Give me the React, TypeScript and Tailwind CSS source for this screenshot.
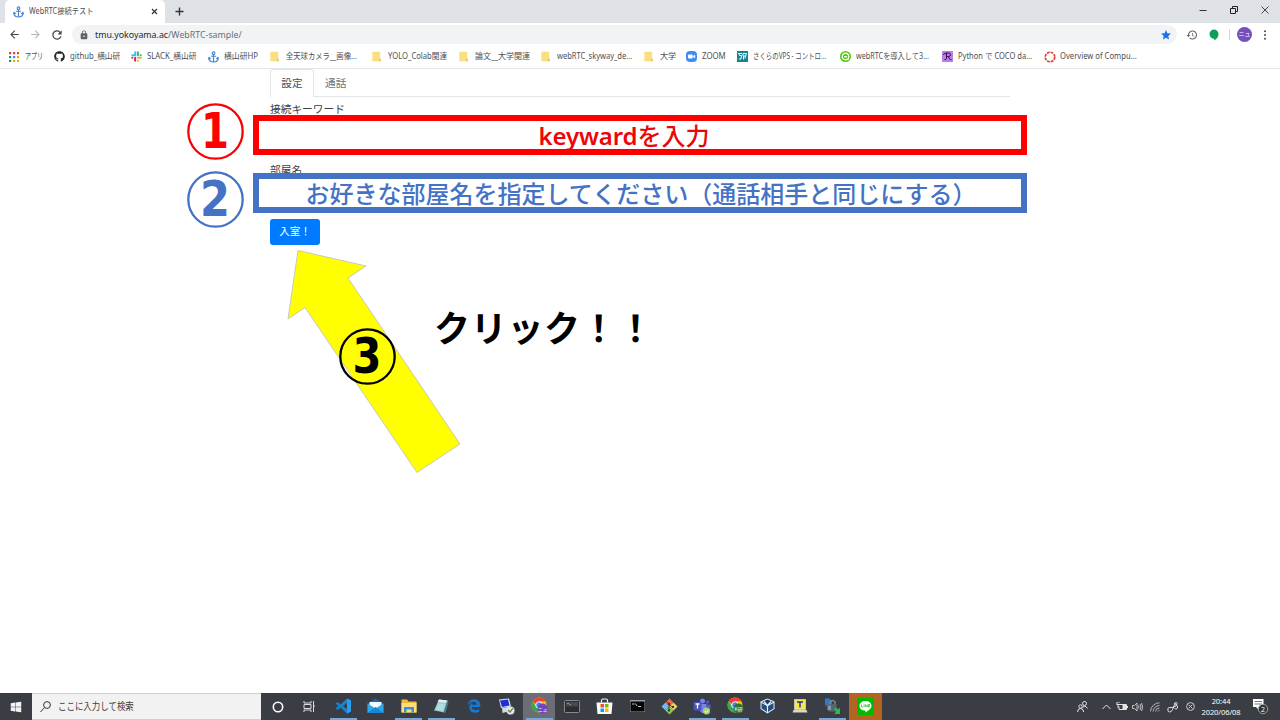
import type { ReactNode } from "react";
import { FaGithub, FaWindows, FaEdgeLegacy } from "react-icons/fa";
import { MdHistory, MdLock, MdStar, MdRefresh, MdArrowBack, MdArrowForward } from "react-icons/md";

const Anchor = () => (
  <svg width="11" height="12" viewBox="0 0 22 24" fill="none" stroke="#4a86cf" strokeWidth="2.4">
    <circle cx="11" cy="4.5" r="2.6" />
    <path d="M11 7v15M6 10.5h10M2 14c0 5 4 8 9 8s9-3 9-8M.8 17l1.4-4 3.4 2.4M21.2 17l-1.4-4-3.4 2.4" />
  </svg>
);

const Folder = () => (
  <svg width="9" height="11" viewBox="0 0 9 11">
    <path d="M.3 .8h7.900v6.700h.8V10.300H.3z" fill="#fadf82" />
    <path d="M6.500 8h2.500v2.300H6.500z" fill="#f0cd62" />
  </svg>
);

const AppsGrid = () => (
  <svg width="10" height="10" viewBox="0 0 10 10">
    <path d="M0 0h2.2v2.2H0zM4 0h2.2v2.2H4zM8 0h2v2.2H8z" fill="#db4437" />
    <path d="M0 4h2.2v2.2H0z" fill="#0f9d58" />
    <path d="M4 4h2.2v2.2H4z" fill="#4285f4" />
    <path d="M8 4h2v2.2H8zM4 8h2.2v2H4zM8 8h2v2H8z" fill="#f4a400" />
    <path d="M0 8h2.2v2H0z" fill="#0f9d58" />
  </svg>
);

const Slack = () => (
  <svg width="11" height="11" viewBox="0 0 22 22" strokeWidth="4" strokeLinecap="round">
    <path d="M8.3 2.5v6M2.5 8.3h6" stroke="#36c5f0" />
    <path d="M13.7 2.5v6M19.5 8.3h-.2" stroke="#2eb67d" />
    <path d="M13.7 13.7h6M13.7 19.5v-.2" stroke="#ecb22e" />
    <path d="M8.3 13.7v6M2.5 13.7h.2" stroke="#e01e5a" />
  </svg>
);

const Zoom = () => (
  <svg width="11" height="11" viewBox="0 0 22 22">
    <rect width="22" height="22" rx="8" fill="#3f8cf7" />
    <rect x="4" y="7" width="9.5" height="8" rx="1.8" fill="#fff" />
    <path d="M14.3 10l4-2.6v7.2l-4-2.6z" fill="#fff" />
  </svg>
);

const Sakura = () => (
  <svg width="11" height="11" viewBox="0 0 22 22">
    <rect width="22" height="22" fill="#138490" />
    <path d="M10 5H3l2 4h4l-1 7H4M12 5h7l-2 5h-4v7M12 5v5M17 10l-1 5" fill="none" stroke="#fff" strokeWidth="2" />
  </svg>
);

const Qiita = () => (
  <svg width="11" height="11" viewBox="0 0 22 22">
    <circle cx="11" cy="11" r="11" fill="#50c80f" />
    <circle cx="11" cy="11" r="6.500" fill="none" stroke="#fff" strokeWidth="2.6" />
    <path d="M15 15l2.500 2.500" stroke="#fff" strokeWidth="2" />
    <path d="M8 10h6v3H8z" fill="#fff" />
  </svg>
);

const PurpleR = () => (
  <svg width="11" height="11" viewBox="0 0 22 22">
    <rect width="22" height="22" fill="#bb7de8" />
    <path d="M9 4v11q0 3-4 2M3 8q0-4 6-4h4q4 0 4 3.500T13 11H9M12.500 11l3 5.500q1 1 3.500 .5" fill="none" stroke="#341048" strokeWidth="2" />
  </svg>
);

const DottedRing = () => (
  <svg width="12" height="12" viewBox="0 0 24 24">
    <circle cx="12" cy="12" r="9.500" fill="none" stroke="#e0392d" strokeWidth="3.400" strokeDasharray="5.600 1.860" />
  </svg>
);

type Mark = { icon: ReactNode; label: string; box: string; text: string };

const marks: Mark[] = [
  { icon: <AppsGrid />, label: "アプリ", box: "w-[45px]", text: "scale-x-[0.71]" },
  { icon: <FaGithub size={11} color="#24292e" />, label: "github_横山研", box: "w-[77px]", text: "scale-x-[0.905]" },
  { icon: <Slack />, label: "SLACK_横山研", box: "w-[77px]", text: "scale-x-[0.91]" },
  { icon: <Anchor />, label: "横山研HP", box: "w-[61.5px]", text: "scale-x-[0.92]" },
  { icon: <Folder />, label: "全天球カメラ__画像...", box: "w-[102.5px]", text: "scale-x-[0.86]" },
  { icon: <Folder />, label: "YOLO_Colab関連", box: "w-[87px]", text: "scale-x-[0.9]" },
  { icon: <Folder />, label: "論文__大学関連", box: "w-[82px]", text: "scale-x-[0.94]" },
  { icon: <Folder />, label: "webRTC_skyway_de...", box: "w-[103px]", text: "scale-x-[0.885]" },
  { icon: <Folder />, label: "大学", box: "w-[42px]", text: "scale-x-[0.95]" },
  { icon: <Zoom />, label: "ZOOM", box: "w-[50.5px]", text: "scale-x-[0.92]" },
  { icon: <Sakura />, label: "さくらのVPS - コントロ...", box: "w-[103px]", text: "scale-x-[0.755]" },
  { icon: <Qiita />, label: "webRTCを導入して3...", box: "w-[102.5px]", text: "scale-x-[0.85]" },
  { icon: <PurpleR />, label: "Python で COCO da...", box: "w-[102px]", text: "scale-x-[0.885]" },
  { icon: <DottedRing />, label: "Overview of Compu...", box: "w-[100px]", text: "scale-x-[0.9]" },
];

const Chrome = ({ badge, letters }: { badge: string; letters: string }) => (
  <svg className="ml-[2px]" width="19" height="18" viewBox="0 0 19 18">
    <circle cx="8" cy="8" r="7.500" fill="#fbc116" />
    <path d="M1.500 4.250A7.500 7.500 0 0 0 8 15.500L11 10 8 8 4.800 9.800z" fill="#34a853" />
    <path d="M1.500 4.250A7.500 7.500 0 0 1 14.500 4.250H8L4.500 7z" fill="#e94335" />
    <circle cx="8" cy="8" r="3.500" fill="#fff" />
    <circle cx="8" cy="8" r="2.700" fill="#4285f4" />
    <circle cx="11.500" cy="11.500" r="5" fill={badge} />
    <text x="11.500" y="13.500" fontSize="4.800" fill="#fff" textAnchor="middle" fontFamily="Noto Sans CJK JP, sans-serif">{letters}</text>
  </svg>
);

const VsCode = () => (
  <svg width="17" height="16" viewBox="0 0 34 32">
    <path d="M24 1l8 4v22l-8 4L11 19l-6 5-4-3 6-5-6-5 4-3 6 5zM24 10l-8 6 8 6z" fill="#1683cf" fillRule="evenodd" />
    <path d="M24 1l8 4v22l-8 4z" fill="#2a9df0" />
  </svg>
);
const Mail = () => (
  <svg width="17" height="16" viewBox="0 0 34 32">
    <path d="M1 11L17 1l16 10v18H1z" fill="#0f6cbd" />
    <path d="M5 8h24v14H5z" fill="#f4fbff" />
    <path d="M1 11l16 10 16-10v19H1z" fill="#2fa7e8" />
    <path d="M1 30l16-12 16 12z" fill="#1985d4" />
  </svg>
);
const Explorer = () => (
  <svg width="16" height="14" viewBox="0 0 32 28">
    <path d="M1 1h11l3 4h16v22H1z" fill="#f0b93a" />
    <path d="M1 8h30v19H1z" fill="#ffdc7c" />
    <path d="M6 16h20v11h-5v-6H11v6H6z" fill="#3b91d6" />
  </svg>
);
const Notepad = () => (
  <svg width="16" height="16" viewBox="0 0 32 32">
    <path d="M12 3l17 2-6 24L2 25z" fill="#8fc4cc" />
    <path d="M12 3l17 2-1 5L9 8z" fill="#e4eeee" />
    <path d="M28 5l3 3-6 22-4-1z" fill="#4b7d88" />
    <path d="M10 10l15 2-5 15-15-4z" fill="#b0dcdf" />
  </svg>
);
const Remote = () => (
  <svg width="17" height="17" viewBox="0 0 34 34">
    <path d="M2 3l20-2 4 16-20 3z" fill="#dfe3ec" />
    <path d="M4 5l16-2 3 12-15 3z" fill="#1c2fd0" />
    <path d="M8 20l14-2 2 8-15 4z" fill="#d5d8dd" />
    <circle cx="25" cy="25" r="8" fill="#e3e7e4" />
    <path d="M20 24l4 4 6-8" fill="none" stroke="#5c7c5c" strokeWidth="2.500" />
  </svg>
);
const Terminal = () => (
  <svg width="16" height="13" viewBox="0 0 32 26">
    <rect x="1" y="1" width="30" height="24" rx="2" fill="#2c2d2f" stroke="#85888c" strokeWidth="2" />
    <path d="M4 4h24v9H4z" fill="#47494c" />
    <path d="M6 7h4M11 9h3" stroke="#c5c5c5" strokeWidth="1.300" />
  </svg>
);
const Store = () => (
  <svg width="17" height="17" viewBox="0 0 34 34">
    <path d="M11 9V5q0-3 3-3h6q3 0 3 3v4" fill="none" stroke="#f4f4f4" strokeWidth="2.400" />
    <path d="M1 9h32l-2 23H3z" fill="#fafafa" />
    <path d="M9 12h7v7H9z" fill="#f25022" />
    <path d="M18 12h7v7h-7z" fill="#7fba00" />
    <path d="M9 21h7v7H9z" fill="#00a4ef" />
    <path d="M18 21h7v7h-7z" fill="#ffb900" />
  </svg>
);
const Cmd = () => (
  <svg width="15" height="12" viewBox="0 0 30 24">
    <path d="M0 0h30v24H0z" fill="#9a9da0" />
    <path d="M1 3h28v20H1z" fill="#050505" />
    <path d="M4 8h5M11 7l3 5M16 13h6" stroke="#ddd" strokeWidth="1.800" />
  </svg>
);
const Git = () => (
  <svg width="17" height="17" viewBox="0 0 34 34">
    <path d="M17 1l8 8-8 8-8-8z" fill="#e9694f" />
    <path d="M9 9l8 8-8 8-8-8z" fill="#74b8ea" />
    <path d="M25 9l8 8-8 8-8-8z" fill="#f4d35b" />
    <path d="M17 17l8 8-8 8-8-8z" fill="#8cc65b" />
    <path d="M11 7l5 5v14M16 13l8 6" fill="none" stroke="#30343a" strokeWidth="1.800" />
    <circle cx="16" cy="12" r="2.300" fill="#30343a" />
    <circle cx="16" cy="25" r="2.300" fill="#30343a" />
    <circle cx="24" cy="18" r="2.300" fill="#30343a" />
  </svg>
);
const Teams = () => (
  <svg width="18" height="17" viewBox="0 0 36 34">
    <circle cx="19" cy="6" r="5" fill="#7b83eb" />
    <circle cx="29" cy="8" r="3.500" fill="#5059c9" />
    <path d="M13 12h14v13q-2 6-8 5-5-1-6-7z" fill="#7b83eb" />
    <path d="M28 13h7v9q-2 5-7 3z" fill="#5059c9" />
    <rect x="1" y="8" width="16" height="17" rx="1.500" fill="#4b53bc" />
    <path d="M5 12h8M9 12v9" stroke="#fff" strokeWidth="2.600" />
    <circle cx="27" cy="26" r="7" fill="#a6d26a" />
    <path d="M23.500 26l3 3 4.500-5" fill="none" stroke="#fff" strokeWidth="2" />
  </svg>
);
const VBox = () => (
  <svg width="15" height="16" viewBox="0 0 30 32">
    <path d="M15 1l14 6v15l-14 9L1 22V7z" fill="#e4edf5" />
    <path d="M15 3l11 5-11 6L4 8z" fill="#183a61" />
    <path d="M3 10l11 6v12L3 21zM27 10l-11 6v12l11-7z" fill="#214f80" />
    <path d="M8 7l7 8 7-8M15 15v12" fill="none" stroke="#e4edf5" strokeWidth="2.400" />
  </svg>
);
const TeraTerm = () => (
  <svg width="16" height="14" viewBox="0 0 32 28">
    <path d="M5 1h22v20H5z" fill="#f3e94e" stroke="#c5c5b8" strokeWidth="2" />
    <path d="M10 6h12M16 6v11" fill="none" stroke="#252eaa" strokeWidth="3" />
    <path d="M3 22h26l2 5H1z" fill="#d7d5cd" />
  </svg>
);
const SftpLock = () => (
  <svg width="17" height="17" viewBox="0 0 34 34">
    <path d="M2 1h9l5 5v9H2z" fill="#2b7bc5" />
    <path d="M12 12V8q5-6 10 0v7" fill="none" stroke="#7c868d" strokeWidth="3" />
    <path d="M9 12h16v15H9z" fill="#59646d" />
    <path d="M7 15h7v9H7z" fill="#8a949c" />
    <path d="M20 20l4-1 4 4 4-4v13H20l4-4z" fill="#28bd49" />
  </svg>
);
const Line = () => (
  <svg width="17" height="17" viewBox="0 0 34 34">
    <rect width="34" height="34" rx="3" fill="#00b900" />
    <path d="M17 6c7 0 12 4 12 10 0 6-8 10-12 13v-4C9 25 5 21 5 16 5 10 10 6 17 6z" fill="#fff" />
    <path d="M9 13v5h3M14 13v5M16.500 18v-5l4 5v-5M26 13h-3v5h3M23 15.500h3" fill="none" stroke="#00b900" strokeWidth="1.300" />
  </svg>
);

const tasks: { icon: ReactNode; running?: boolean; bg?: string }[] = [
  { icon: <VsCode />, running: true },
  { icon: <Mail /> },
  { icon: <Explorer />, running: true },
  { icon: <Notepad />, running: true },
  { icon: <FaEdgeLegacy size={14} color="#1479d6" /> },
  { icon: <Remote /> },
  { icon: <Chrome badge="#7248b9" letters="ニュ" />, running: true, bg: "bg-[#6b6f75]" },
  { icon: <Terminal /> },
  { icon: <Store /> },
  { icon: <Cmd /> },
  { icon: <Git /> },
  { icon: <Teams />, running: true },
  { icon: <Chrome badge="#33713b" letters="K研" />, running: true },
  { icon: <VBox /> },
  { icon: <TeraTerm /> },
  { icon: <SftpLock />, running: true },
  { icon: <Line />, bg: "bg-[#b3651f]" },
];

function Browser() {
  return (
    <header className="h-[69px] shrink-0 border-b border-[#e4e4e6]">
      <div className="flex h-[23px] bg-[#dee1e6] pl-[5px]">
        <div className="flex w-[160px] items-center rounded-t-[5px] bg-white pl-2">
          <Anchor />
          <span className="ml-[5px] w-[120px] origin-left scale-x-[0.855] whitespace-nowrap text-[8.5px] text-[#4c4f53]">WebRTC接続テスト</span>
          <svg className="ml-auto mr-[7px]" width="7" height="7" viewBox="0 0 7 7" stroke="#333639" strokeWidth="1.200">
            <path d="M1 1l5 5M6 1L1 6" />
          </svg>
        </div>
        <svg className="ml-[10px] mt-[7px]" width="9" height="9" viewBox="0 0 9 9" stroke="#333639" strokeWidth="1.400">
          <path d="M4.500 .5v8M.5 4.500h8" />
        </svg>
        <div className="ml-auto flex h-[19px] items-center gap-[23px] pr-[11px]">
          <svg width="8" height="8" viewBox="0 0 8 8" stroke="#333" strokeWidth="1"><path d="M.5 4.500h7" /></svg>
          <svg width="8" height="8" viewBox="0 0 8 8" fill="none" stroke="#222" strokeWidth="1"><path d="M.5 2.500h5v5h-5zM2.500 2V.5h5v5H6" /></svg>
          <svg width="8" height="8" viewBox="0 0 8 8" stroke="#333" strokeWidth=".9"><path d="M.5 .5l7 7M7.500 .5l-7 7" /></svg>
        </div>
      </div>
      <div className="flex h-[23px] items-center bg-white pl-2">
        <MdArrowBack size={13} color="#44474b" />
        <MdArrowForward size={13} color="#b4b6b9" className="ml-[8px]" />
        <MdRefresh size={14} color="#44474b" className="ml-[8px]" />
        <div className="ml-2 flex h-[19px] w-[1105px] items-center rounded-full bg-[#f1f3f4] pl-[7px] pr-[5px]">
          <MdLock size={10} color="#5f6368" />
          <span className="ml-[6px] origin-left scale-x-[0.948] whitespace-nowrap text-[9.3px] text-[#6c6f73]">
            <span className="text-[#26282b]">tmu.yokoyama.ac</span>/WebRTC-sample/
          </span>
          <MdStar size={12} color="#1a73e8" className="ml-auto" />
        </div>
        <MdHistory size={12} color="#5f6368" className="ml-[9px]" />
        <svg className="ml-[11px]" width="10" height="12" viewBox="0 0 10 12">
          <path d="M5 .5a4.500 4.500 0 0 1 4.500 4.700C9.500 8 7.500 10 5.200 11.500V9.700A4.600 4.600 0 0 1 5 .5z" fill="#0f9d58" />
        </svg>
        <div className="ml-[10px] h-[11px] w-px bg-[#d5d7da]" />
        <div className="ml-[7px] flex size-[15px] items-center justify-center rounded-full bg-[#7550bd] text-[6px] text-white">ニュ</div>
        <svg className="ml-[11px]" width="4" height="10" viewBox="0 0 4 10" fill="#505357">
          <circle cx="2" cy="1.300" r="1.050" /><circle cx="2" cy="5" r="1.050" /><circle cx="2" cy="8.700" r="1.050" />
        </svg>
      </div>
      <nav className="flex h-[21px] items-center bg-white pl-[9px] text-[8.5px] text-[#4c4f53]">
        {marks.map((m) => (
          <div key={m.label} className={`flex shrink-0 items-center ${m.box}`}>
            <span className="flex w-4 shrink-0">{m.icon}</span>
            <span className={`origin-left whitespace-nowrap ${m.text}`}>{m.label}</span>
          </div>
        ))}
      </nav>
    </header>
  );
}

function Step({ n, place, digit }: { n: string; place: string; digit: string }) {
  return (
    <div className={`absolute flex size-[57px] items-center justify-center rounded-full font-['DejaVu_Sans'] text-[49px] font-bold leading-none ${place}`}>
      <svg className="absolute inset-0" width="57" height="57" viewBox="0 0 57 57" fill="none" stroke="currentColor" strokeWidth="2.300">
        <circle cx="28.500" cy="28.500" r="27.200" />
      </svg>
      <span className={digit}>{n}</span>
    </div>
  );
}

function Page() {
  return (
    <main className="relative flex-1 bg-white">
      <div className="ml-[270px] w-[740px] text-[10.7px] text-[#3b4045]">
        <div className="flex h-[28px] border-b border-[#e3e6e9]">
          <div className="-mb-px flex w-[44px] items-center justify-center rounded-t-[3px] border border-b-0 border-[#e3e6e9] bg-white text-[#495057]">設定</div>
          <div className="flex items-center pl-[11px] pt-px text-[#6c757d]">通話</div>
        </div>
        <div className="mt-1 h-4 leading-4">接続キーワード</div>
        <div className="mt-[45px] h-4 leading-4">部屋名</div>
        <button className="mt-[41px] flex h-[26px] w-[50px] items-center justify-center rounded-[3px] bg-[#007bff] text-[10.5px] text-white">入室！</button>
      </div>
      <Step n="1" place="left-[187px] top-[33.500px] text-[#ff0000]" digit="scale-x-[0.82]" />
      <Step n="2" place="left-[187px] top-[102px] text-[#4472c4]" digit="scale-x-[0.88]" />
      <div className="absolute left-[253px] top-[46px] flex h-[40px] w-[774px] items-center justify-center border-[6px] border-[#ff0000] bg-white pr-[32px] pt-[2px] text-[24px] leading-none text-[#ee0505]"><span className="font-semibold tracking-[-0.1px]">keyward</span><span className="font-medium">を入力</span></div>
      <div className="absolute left-[253px] top-[104px] flex h-[40px] w-[774px] items-center justify-center whitespace-nowrap border-[6px] border-[#4472c4] bg-white pl-[2px] pt-[2px] text-[24px] font-medium leading-none text-[#4472c4]">お好きな部屋名を指定してください（通話相手と同じにする）</div>
      <svg className="absolute left-[280px] top-[175px]" width="190" height="235" viewBox="280 244 190 235">
        <path d="M298 250.500l68 15.500-18 12 112 166-43 28.500-112-165-17 11.500z" fill="#ffff00" stroke="#c9c9b8" />
      </svg>
      <Step n="3" place="left-[339px] top-[259px] text-black" digit="scale-x-[0.85]" />
      <div className="absolute left-[434px] top-[241px] whitespace-nowrap text-[36px] font-bold leading-[38px] tracking-[0.7px] text-black">クリック！！</div>
    </main>
  );
}

function Taskbar() {
  return (
    <footer className="flex h-[27px] shrink-0 bg-[#3a3e44] text-white">
      <div className="flex w-[32px] items-center justify-center"><FaWindows size={12} color="#f3f3f3" /></div>
      <div className="flex w-[229px] items-center border-y border-[#cfcfcf] bg-[#f2f2f2] pl-2 text-[10px] text-[#3e3e3e]">
        <svg width="11" height="12" viewBox="0 0 11 12" fill="none" stroke="#333" strokeWidth="1"><circle cx="7" cy="4" r="3.400" /><path d="M4.600 6.500L.5 11" /></svg>
        <span className="ml-[7px] origin-left scale-x-[0.845] whitespace-nowrap">ここに入力して検索</span>
      </div>
      <div className="flex w-[33px] items-center justify-center">
        <svg width="12" height="12" viewBox="0 0 12 12" fill="none" stroke="#fff" strokeWidth="1.600"><circle cx="6" cy="6" r="4.700" /></svg>
      </div>
      <div className="flex w-[33px] items-center justify-center pr-[3px]">
        <svg width="12" height="11" viewBox="0 0 12 11" fill="none" stroke="#d8dadd" strokeWidth="1"><path d="M1 0v2h7V0M1 3.500h7v4H1zM1 11V9h7v2M10.500 0v11M10 5h2" /></svg>
      </div>
      {tasks.map((t, i) => (
        <div key={i} className={`flex w-[32.65px] flex-col items-center ${t.bg ?? ""}`}>
          <div className="flex h-[25px] items-center pt-px">{t.icon}</div>
          {t.running && <div className="h-[2px] w-[27px] bg-[#76a9d8]" />}
        </div>
      ))}
      <div className="ml-auto flex items-center pr-[11px]">
        <svg width="11" height="11" viewBox="0 0 11 11" fill="none" stroke="#e4e4e4" strokeWidth="1"><circle cx="7.500" cy="2.500" r="2" /><path d="M5.500 7q2-4 5 .5" /><circle cx="3.500" cy="5.500" r="1.700" /><path d="M.6 11q0-3.500 3-3.500t3 3.500" /></svg>
        <svg className="ml-[14px]" width="9" height="6" viewBox="0 0 9 6" fill="none" stroke="#e4e4e4"><path d="M.5 5l4-4 4 4" /></svg>
        <svg className="ml-[5px]" width="12" height="9" viewBox="0 0 12 9" fill="none" stroke="#e4e4e4"><path d="M3 2.500h7.500v5H3v-3M11.500 4v2M1 0v2M3 0v1M.5 2.500h3M2 3v3" /><path d="M7 3h3v4H7z" fill="#e4e4e4" /></svg>
        <svg className="ml-[4px]" width="11" height="10" viewBox="0 0 11 10" fill="none" stroke="#d0d0d0" strokeWidth=".9"><path d="M.5 3.500h2L5 1v8L2.500 6.500h-2zM6.500 3.500q1 1.500 0 3M8 2q2 3 0 6M9.500 1q2.500 4 0 8" /></svg>
        <svg className="ml-[7px]" width="10" height="10" viewBox="0 0 10 10" fill="none" stroke="#bfc1c3" strokeWidth=".9"><path d="M.5 9.500A9 9 0 0 1 9.500 .8M3 9.500A6.500 6.500 0 0 1 9.500 3.500M5.500 9.500a4 4 0 0 1 4-3.500M8 9.500l1.500-1.500" /></svg>
        <svg className="ml-[7px]" width="12" height="12" viewBox="0 0 12 12" fill="none" stroke="#e4e4e4" strokeWidth="1"><path d="M1 7.500q-1 3 1.500 3.500 2 0 3-2.500l2-5Q8 1 9.500 1.500T9 5L5.500 6.500H2.500q-1.500 0-1.500 1M7 2l3 2.500q1.500 1.500 0 3T7.500 7" /></svg>
        <svg className="ml-[7px]" width="9" height="9" viewBox="0 0 9 9" fill="none" stroke="#c8c9cb" strokeWidth="1"><circle cx="4.500" cy="4.500" r="3.900" /><path d="M2.700 2.700l3.600 3.600M6.300 2.700L2.700 6.300" /></svg>
        <div className="ml-[6px] w-[40px] text-center text-[7.5px] leading-[11px] tracking-[-0.1px]">
          <div>20:44</div>
          <div className="whitespace-nowrap">2020/06/08</div>
        </div>
        <svg className="ml-[11px]" width="17" height="17" viewBox="0 0 17 17">
          <path d="M1 1h10.500v8H7v3L4 9H1z" fill="#fff" /><path d="M2.500 3.500h7.500M2.500 6h7.500" stroke="#555" strokeWidth=".8" />
          <circle cx="11" cy="11" r="4.700" fill="#303439" stroke="#b9b9b9" strokeWidth=".8" />
          <text x="11" y="13.600" fontSize="7" textAnchor="middle" fill="#fff" fontFamily="Noto Sans, sans-serif">2</text>
        </svg>
      </div>
    </footer>
  );
}

export default function App() {
  return (
    <div className="flex h-[720px] w-[1280px] flex-col overflow-hidden bg-white font-['Noto_Sans','Noto_Sans_CJK_JP',sans-serif]">
      <Browser />
      <Page />
      <Taskbar />
    </div>
  );
}
